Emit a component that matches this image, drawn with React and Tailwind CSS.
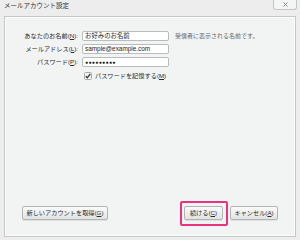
import React from 'react'

const font = "font-['Liberation_Sans','Noto_Sans_CJK_JP',sans-serif]"

function Key({ k }) {
  return (
    <span>
      (<span className="underline underline-offset-[1px]">{k}</span>)
    </span>
  )
}

function Field({ label, k, value, type = 'text', hint }) {
  return (
    <div className="flex items-center h-[10px]">
      <div className="w-[73px] text-right text-[6.2px] leading-none text-[#2a2a2a]">
        {label}
        <Key k={k} />:
      </div>
      <div className="ml-[4px] w-[87px] h-[10px] bg-white border border-[#b9bcbc] rounded-[2px] flex items-center px-[2px] text-[6.4px] leading-none text-[#1e1e1e]">
        {type === 'password' ? (
          <span className="text-[5px] tracking-[0.4px] text-[#111]">●●●●●●●●●</span>
        ) : (
          value
        )}
      </div>
      {hint && (
        <div className="ml-[6px] text-[6px] leading-none text-[#666]">{hint}</div>
      )}
    </div>
  )
}

function Btn({ children, w, ring }) {
  return (
    <div
      className={`relative h-[14px] ${w} flex items-center justify-center rounded-[2px] border border-[#b3b5b5] bg-gradient-to-b from-[#fbfbfb] to-[#e2e3e3] shadow-[0_1px_0_rgba(0,0,0,0.08)] text-[6.2px] leading-none text-[#2a2a2a]`}
    >
      {children}
      {ring && (
        <span className="absolute -left-[5px] -right-[6px] -top-[6px] -bottom-[7px] border-2 border-[#e8337f] rounded-[2px]" />
      )}
    </div>
  )
}

export default function App() {
  return (
    <div className={`w-[300px] h-[240px] bg-[#ecedec] ${font} flex flex-col overflow-hidden`}>
      <div className="h-[16px] flex items-start justify-between">
        <div className="pl-[4px] pt-[2px] text-[6.5px] leading-[8px] text-[#333]">メールアカウント設定</div>
        <div className="mr-[3px] w-[24px] h-[10px] border border-t-0 border-[#c4c6c6] rounded-b-[3px] bg-[#f4f5f5] flex items-center justify-center">
          <svg width="5" height="5" viewBox="0 0 5 5">
            <path d="M0.5 0.5L4.5 4.5M4.5 0.5L0.5 4.5" stroke="#8a8c8c" strokeWidth="1" />
          </svg>
        </div>
      </div>
      <div className="mx-[4px] h-[221px] border border-[#c6c8c7] bg-[#f2f4f4] shadow-[inset_0_0_0_1px_#fbfcfc] flex flex-col">
        <div className="pt-[14px] flex flex-col gap-[3px]">
          <Field label="あなたのお名前" k="N" value="お好みのお名前" hint="受信者に表示される名前です。" />
          <Field label="メールアドレス" k="L" value="sample@example.com" />
          <Field label="パスワード" k="P" type="password" />
          <div className="flex items-center h-[10px] mt-[1px] pl-[79px]">
            <svg width="8" height="8" viewBox="0 0 8 8">
              <rect x="0.5" y="0.5" width="7" height="7" rx="1" fill="#f4f4f4" stroke="#a9abab" />
              <path d="M1.8 4.2L3.3 5.8L6.3 1.8" fill="none" stroke="#333" strokeWidth="1.3" />
            </svg>
            <span className="ml-[3px] text-[6.2px] leading-none text-[#2a2a2a]">
              パスワードを記憶する<Key k="M" />
            </span>
          </div>
        </div>
        <div className="flex-1" />
        <div className="flex items-center px-[17px] pb-[16px]">
          <Btn w="w-[86px]">
            新しいアカウントを取得<Key k="G" />
          </Btn>
          <div className="flex-1" />
          <Btn w="w-[39px]" ring>
            続ける<Key k="C" />
          </Btn>
          <div className="w-[7px]" />
          <Btn w="w-[48px]">
            キャンセル<Key k="A" />
          </Btn>
        </div>
      </div>
    </div>
  )
}
